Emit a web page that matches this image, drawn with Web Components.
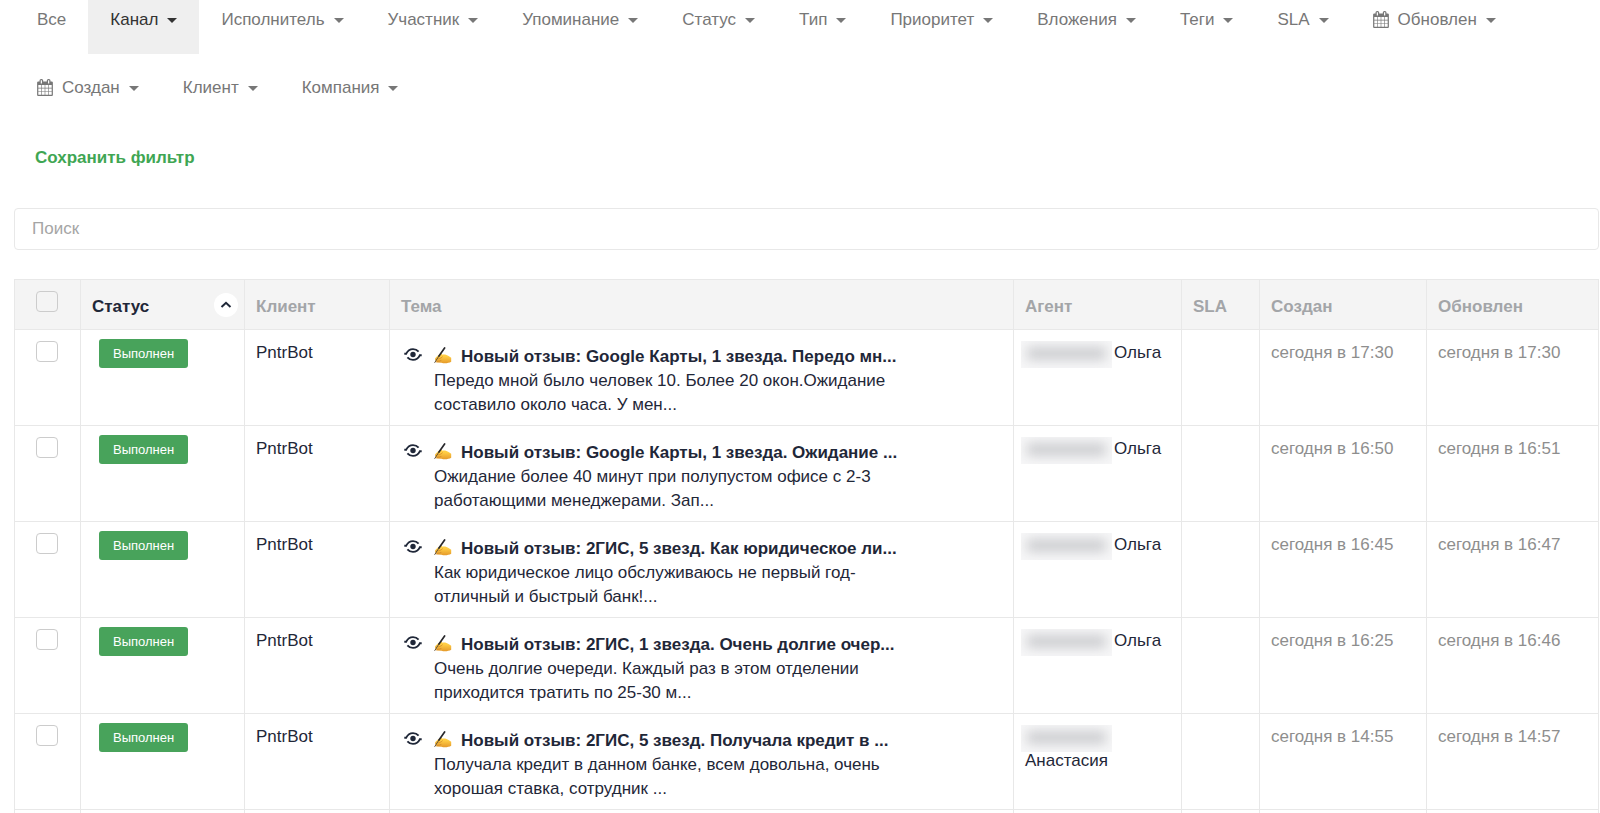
<!DOCTYPE html>
<html lang="ru">
<head>
<meta charset="utf-8">
<title>Обращения</title>
<style>
  body { margin: 0; background: #fff; color: #1f2738; font: 17px/24px "Liberation Sans", Arial, sans-serif; overflow: hidden; }
</style>
</head>
<body>
<ticket-page></ticket-page>
<script>
const define = (name, html, setup) => {
  const tpl = document.createElement('template');
  tpl.innerHTML = html;
  customElements.define(name, class extends HTMLElement {
    constructor() {
      super();
      this.attachShadow({ mode: 'open' }).append(tpl.content.cloneNode(true));
    }
    connectedCallback() { if (setup) setup(this, this.shadowRoot); }
  });
};

define('calendar-icon', `
  <style>:host { display: block; width: 16px; height: 17px; margin-bottom: 2px; } svg { display: block; width: 100%; height: 100%; }</style>
  <svg viewBox="0 0 1664 1792" fill="currentColor" aria-hidden="true"><path d="M128 1664h288v-288h-288v288zm352 0h320v-288h-320v288zm-352-352h288v-320h-288v320zm352 0h320v-320h-320v320zm-352-384h288v-288h-288v288zm736 736h320v-288h-320v288zm-384-736h320v-288h-320v288zm768 736h288v-288h-288v288zm-384-352h320v-320h-320v320zm-352-864v-288q0-13-9.5-22.5t-22.5-9.5h-64q-13 0-22.5 9.5t-9.5 22.5v288q0 13 9.5 22.5t22.5 9.5h64q13 0 22.5-9.5t9.5-22.5zm736 864h288v-320h-288v320zm-384-384h320v-288h-320v288zm384 0h288v-288h-288v288zm32-480v-288q0-13-9.5-22.5t-22.5-9.5h-64q-13 0-22.5 9.5t-9.5 22.5v288q0 13 9.5 22.5t22.5 9.5h64q13 0 22.5-9.5t9.5-22.5zm384-64v1280q0 52-38 90t-90 38h-1408q-52 0-90-38t-38-90v-1280q0-52 38-90t90-38h128v-96q0-66 47-113t113-47h64q66 0 113 47t47 113v96h384v-96q0-66 47-113t113-47h64q66 0 113 47t47 113v96h128q52 0 90 38t38 90z"/></svg>`);

define('filter-item', `
  <style>
    :host { display: block; color: #777; }
    :host([active]) { color: #333; background: #efefef; }
    button { display: flex; align-items: center; gap: 9px; margin: 0; border: 0; background: none; color: inherit; font: inherit; padding: 8px 22px 22px; cursor: pointer; white-space: nowrap; }
    .caret { border: 5px solid transparent; border-top-color: currentColor; border-bottom: 0; margin-top: 1px; }
    :host([plain]) .caret, calendar-icon { display: none; }
    :host([calendar]) calendar-icon { display: block; }
  </style>
  <button type="button"><calendar-icon></calendar-icon><slot></slot><span class="caret"></span></button>`);

define('filter-bar', `
  <style>:host { display: flex; flex-wrap: wrap; row-gap: 14px; }</style>
  <slot></slot>`);

define('search-box', `
  <style>
    :host { display: block; }
    input { display: block; box-sizing: border-box; width: 100%; height: 42px; padding: 0 17px; border: 1px solid #e8e8e8; border-radius: 4px; font: inherit; color: #333; background: #fff; outline: 0; }
    input::placeholder { color: #a5a5a5; opacity: 1; }
  </style>
  <input type="search" placeholder="Поиск" aria-label="Поиск">`);

define('tick-box', `
  <style>
    :host { display: block; width: 22px; height: 21px; }
    input { appearance: none; display: block; box-sizing: border-box; width: 100%; height: 100%; margin: 0; border: 1px solid #ccc; border-radius: 4px; }
  </style>
  <input type="checkbox">`,
  (host, root) => root.querySelector('input').setAttribute('aria-label', host.getAttribute('label')));

define('status-badge', `
  <style>:host { display: block; width: max-content; padding: 0 14px; border-radius: 3px; background: #48a35b; color: #fff; font-size: 13px; line-height: 29px; }</style>
  <slot></slot>`);

define('sort-mark', `
  <style>
    :host { display: block; }
    button { display: grid; place-items: center; width: 24px; height: 24px; padding: 0; border: 0; border-radius: 50%; background: #fff; color: #1f2738; }
  </style>
  <button type="button" aria-label="Сортировать по статусу"><svg width="12" height="8" viewBox="0 0 12 8" fill="none" stroke="currentColor" stroke-width="2"><path d="M1.500 6 6 1.800 10.500 6"/></svg></button>`);

define('watch-icon', `
  <style>:host { display: block; } svg { display: block; }</style>
  <svg width="18" height="13" viewBox="0 0 18 13" fill="none" stroke="#1f2738" stroke-width="1.900" aria-hidden="true">
    <path d="M0.300 5.700H2.200C3.600 2.800 6 1.100 9 1.100C11.400 1.100 13.200 2 14.600 3.600"/>
    <path d="M17.700 7.300H15.800C14.400 10.200 12 11.900 9 11.900C6.600 11.900 4.800 11 3.400 9.400"/>
    <circle cx="9" cy="6.500" r="2.700" fill="#1f2738" stroke="none"/>
  </svg>`);

define('writing-hand', `
  <style>:host { display: block; } svg { display: block; }</style>
  <svg width="18" height="17" viewBox="0 0 18 17" role="img" aria-label="Пишущая рука">
    <defs><linearGradient id="skin" x1="0" y1="0" x2="0" y2="1"><stop offset=".3" stop-color="#ffcd45"/><stop offset="1" stop-color="#e59a2b"/></linearGradient></defs>
    <path d="M1.200 11.300C2.600 9.300 4.600 7.800 6.400 6.700C7.400 6.100 8.300 6.700 8 7.700C10.400 7.200 13 7.700 14.600 9.100L17.200 10.700V14.800C14.500 16.400 10 16.700 7.500 15.700L2.700 15.600C1.700 15.400 1.700 14.600 2.600 14.300C1.200 14 .6 12.500 1.200 11.300Z" fill="url(#skin)"/>
    <path d="M2.600 14.300C4.600 14.300 6 14.100 7.400 13.400M4.200 11.800C6 11.600 7.400 10.800 8.600 9.600" fill="none" stroke="#cf8628" stroke-width=".8"/>
    <path d="M10.600 1 4.800 9.200" stroke="#28282c" stroke-width="1.700" stroke-linecap="round"/>
    <path d="M4.800 9.200.6 15.800" stroke="#5d4c34" stroke-width="1"/>
  </svg>`);

define('ticket-topic', `
  <style>
    :host { display: grid; grid-template-columns: 18px 1fr; column-gap: 12px; padding-left: 3px; }
    watch-icon { margin-top: 3px; }
    .title { display: flex; gap: 9px; align-items: center; font-weight: bold; color: #1f2738; text-decoration: none; white-space: nowrap; }
    writing-hand { margin-bottom: 4px; }
    p { margin: 0; }
  </style>
  <watch-icon></watch-icon>
  <div><a class="title" href="#"><writing-hand></writing-hand><slot name="title"></slot></a><p><slot></slot></p></div>`);

define('agent-name', `
  <style>
    :host { display: flex; flex-wrap: wrap; column-gap: 2px; }
    .hidden { width: 91px; height: 27px; margin: 0 0 -3px -4px; overflow: hidden; background: #f7f7f8; }
    .hidden::before { content: ""; display: block; height: 13px; margin: 6px 6px; background: #cccdd0; filter: blur(6px); }
  </style>
  <span class="hidden"></span><slot></slot>`);

const tickets = [
  ['Новый отзыв: Google Карты, 1 звезда. Передо мн...', 'Передо мной было человек 10. Более 20 окон.Ожидание<br>составило около часа. У мен...', 'Ольга', '17:30', '17:30'],
  ['Новый отзыв: Google Карты, 1 звезда. Ожидание ...', 'Ожидание более 40 минут при полупустом офисе с 2-3<br>работающими менеджерами. Зап...', 'Ольга', '16:50', '16:51'],
  ['Новый отзыв: 2ГИС, 5 звезд. Как юридическое ли...', 'Как юридическое лицо обслуживаюсь не первый год-<br>отличный и быстрый банк!...', 'Ольга', '16:45', '16:47'],
  ['Новый отзыв: 2ГИС, 1 звезда. Очень долгие очер...', 'Очень долгие очереди. Каждый раз в этом отделении<br>приходится тратить по 25-30 м...', 'Ольга', '16:25', '16:46'],
  ['Новый отзыв: 2ГИС, 5 звезд. Получала кредит в ...', 'Получала кредит в данном банке, всем довольна, очень<br>хорошая ставка, сотрудник ...', 'Анастасия', '14:55', '14:57']
];

define('ticket-table', `
  <style>
    :host { display: block; }
    table { width: 100%; border-collapse: collapse; table-layout: fixed; }
    th, td { box-sizing: border-box; border: 1px solid #e8e8e8; padding: 0 11px; vertical-align: top; text-align: left; }
    th { height: 50px; background: #f4f4f4; color: #a3a5a8; font-weight: bold; vertical-align: middle; padding-top: 4px; }
    th.sorted { color: #1f2738; padding-right: 6px; padding-top: 0; }
    th.sorted div { display: flex; justify-content: space-between; align-items: center; }
    th.sorted span { padding-top: 4px; }
    td { height: 96px; padding-top: 11px; }
    th:first-child, td:first-child { vertical-align: top; padding: 11px 21px 0; }
    td.status { padding: 9px 18px 0; }
    td.topic { padding-top: 15px; }
    td.time { color: #8e8e8e; white-space: nowrap; }
  </style>
  <table>
    <colgroup><col style="width:66px"><col style="width:164px"><col style="width:145px"><col><col style="width:168px"><col style="width:78px"><col style="width:167px"><col style="width:172px"></colgroup>
    <thead><tr>
      <th><tick-box label="Выбрать все"></tick-box></th>
      <th class="sorted" aria-sort="ascending"><div><span>Статус</span><sort-mark></sort-mark></div></th>
      <th>Клиент</th><th>Тема</th><th>Агент</th><th>SLA</th><th>Создан</th><th>Обновлен</th>
    </tr></thead>
    <tbody></tbody>
  </table>`,
  (host, root) => {
    const row = cells => `<tr>${cells}</tr>`;
    root.querySelector('tbody').innerHTML = tickets.map(([title, text, agent, created, updated]) => row(`
      <td><tick-box label="${title}"></tick-box></td>
      <td class="status"><status-badge>Выполнен</status-badge></td>
      <td>PntrBot</td>
      <td class="topic"><ticket-topic><span slot="title">${title}</span>${text}</ticket-topic></td>
      <td><agent-name><span>${agent}</span></agent-name></td>
      <td></td>
      <td class="time">сегодня в ${created}</td>
      <td class="time">сегодня в ${updated}</td>`)).join('') + row('<td></td>'.repeat(8));
  });

define('ticket-page', `
  <style>
    :host { display: block; height: 100vh; overflow: hidden; }
    filter-bar { padding-left: 15px; }
    .save { display: block; width: max-content; margin: 24px 0 38px 35px; color: #3fa653; font-weight: bold; text-decoration: none; }
    search-box { margin: 0 1px 29px 14px; }
    ticket-table { margin: 0 1px 0 14px; }
  </style>
  <filter-bar>
    <filter-item plain>Все</filter-item>
    <filter-item active>Канал</filter-item>
    <filter-item>Исполнитель</filter-item>
    <filter-item>Участник</filter-item>
    <filter-item>Упоминание</filter-item>
    <filter-item>Статус</filter-item>
    <filter-item>Тип</filter-item>
    <filter-item>Приоритет</filter-item>
    <filter-item>Вложения</filter-item>
    <filter-item>Теги</filter-item>
    <filter-item>SLA</filter-item>
    <filter-item calendar>Обновлен</filter-item>
    <filter-item calendar>Создан</filter-item>
    <filter-item>Клиент</filter-item>
    <filter-item>Компания</filter-item>
  </filter-bar>
  <a class="save" href="#">Сохранить фильтр</a>
  <search-box></search-box>
  <ticket-table></ticket-table>`);
</script>
</body>
</html>
